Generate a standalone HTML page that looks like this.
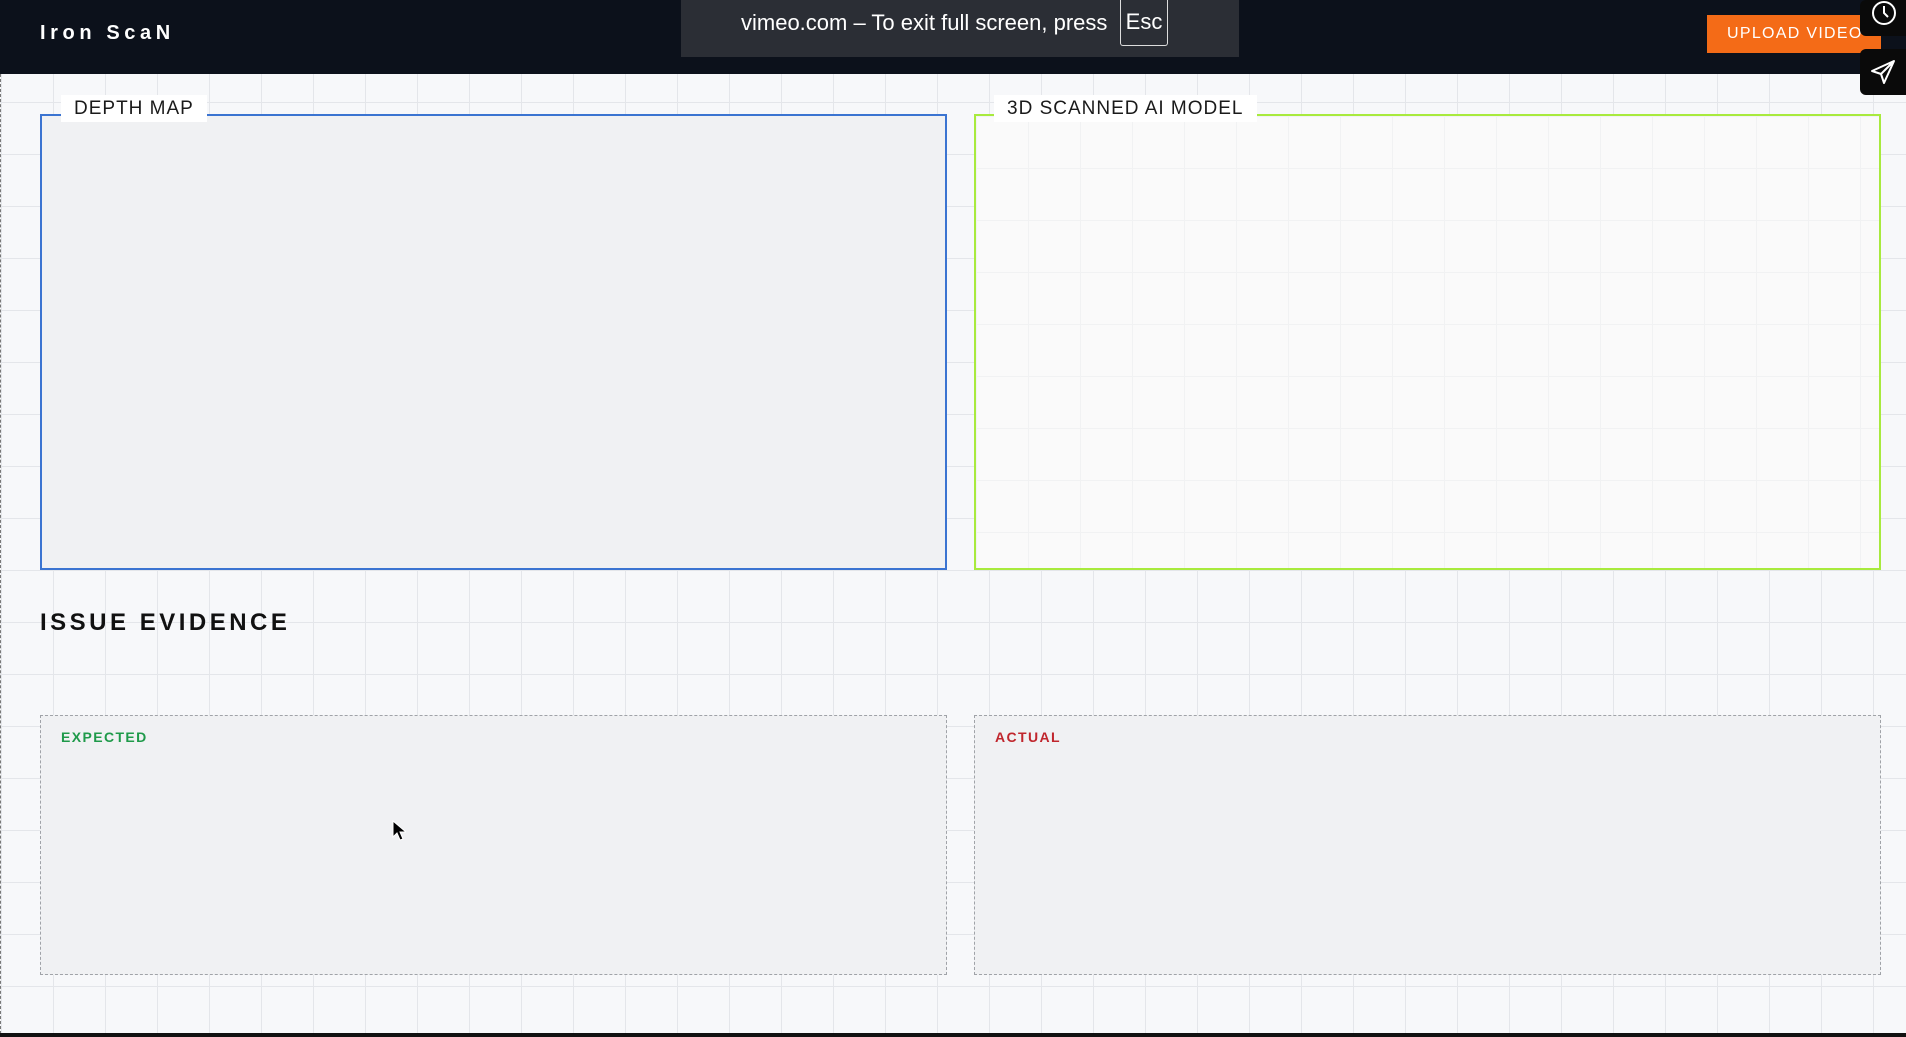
<!DOCTYPE html>
<html><head><style>
*{margin:0;padding:0;box-sizing:border-box}
body{width:1906px;height:1037px;overflow:hidden;position:relative;font-family:"Liberation Sans",Arial,sans-serif;
background-color:#f7f8fa;
background-image:linear-gradient(#e4e6ea 1px,transparent 1px),linear-gradient(90deg,#e4e6ea 1px,transparent 1px);
background-size:52px 52px;background-position:1px 50px;}
.hdr{position:absolute;left:0;top:0;width:1906px;height:74px;background:#0c111b}
.logo{position:absolute;left:40px;top:22px;color:#fff;font-weight:bold;font-size:20px;letter-spacing:4.6px}
.vim{position:absolute;left:681px;top:0;width:558px;height:57px;background:#2b2e35;color:#fff;font-size:22px}
.vim span{position:absolute;left:60px;top:10px}
.esc{position:absolute;left:439px;top:0;width:48px;height:46px;border:1px solid #ddd;border-top:none;border-radius:0 0 3px 3px;text-align:center;line-height:44px}
.up{position:absolute;left:1707px;top:15px;width:174px;height:38px;background:#f46b17;color:#fff;font-size:16px;letter-spacing:1.3px;line-height:38px;padding-left:20px}
.tab{position:absolute;left:1860px;width:46px;background:#0a0a0a;border-radius:6px 0 0 6px}
.box{position:absolute;top:114px;height:456px;border:2px solid}
.lbl{position:absolute;top:95px;height:27px;background:#fff;font-size:19px;letter-spacing:1px;color:#1a1a1a;padding:0 13px;line-height:27px}
.ev{position:absolute;top:715px;height:260px;border:1.5px dashed #a0a3a8;background:#f0f1f3}
.ev b{position:absolute;left:20px;top:13px;font-size:14px;letter-spacing:1.4px}
</style></head><body>
<div style="position:absolute;left:0;top:74px;height:960px;border-left:1.5px dashed #777"></div>
<div class="hdr"></div>
<div class="logo">Iron ScaN</div>
<div class="vim"><span>vimeo.com – To exit full screen, press</span><div class="esc">Esc</div></div>
<div class="up">UPLOAD VIDEO</div>
<div class="tab" style="top:0;height:36px"><svg width="46" height="36" style="position:absolute;left:0;top:0"><circle cx="24" cy="13" r="11" fill="none" stroke="#fff" stroke-width="2"/><path d="M24 6v7l4 4" fill="none" stroke="#fff" stroke-width="2"/></svg></div>
<div class="tab" style="top:49px;height:46px"><svg width="46" height="46"><path d="M34 12 L12 22 L21 25 L24 34 Z M21 25 L34 12" fill="none" stroke="#fff" stroke-width="2" stroke-linejoin="round"/></svg></div>
<div class="box" style="left:40px;width:907px;border-color:#3b74d1;background:#f0f1f3"></div>
<div class="box" style="left:974px;width:907px;border-color:#a8ea3d;background-color:#fafafa;background-image:linear-gradient(#f1f2f3 1px,transparent 1px),linear-gradient(90deg,#f1f2f3 1px,transparent 1px);background-size:52px 52px"></div>
<div class="lbl" style="left:61px">DEPTH MAP</div>
<div class="lbl" style="left:994px">3D SCANNED AI MODEL</div>
<div style="position:absolute;left:40px;top:609px;font-size:24px;font-weight:bold;letter-spacing:3.5px;color:#111">ISSUE EVIDENCE</div>
<div class="ev" style="left:40px;width:907px"><b style="color:#1f9a4a">EXPECTED</b></div>
<div class="ev" style="left:974px;width:907px"><b style="color:#c0262d">ACTUAL</b></div>
<svg style="position:absolute;left:392px;top:820px" width="14" height="22"><path d="M1 1v16l4-4 3 7 3-1-3-7h6z" fill="#000" stroke="#fff" stroke-width="1"/></svg>
<div style="position:absolute;left:0;top:1033px;width:1906px;height:4px;background:#111"></div>
</body></html>
